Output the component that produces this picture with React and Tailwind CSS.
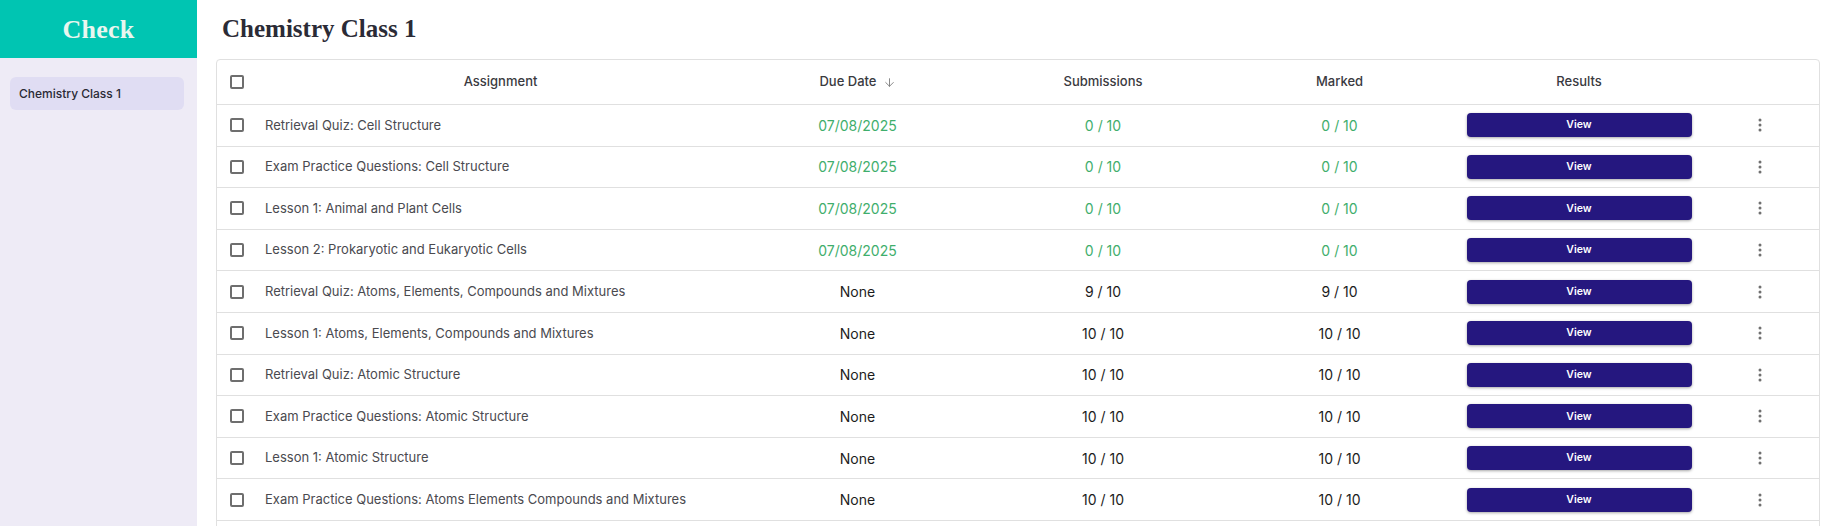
import { ArrowDown } from "lucide-react";

const rows = [
    { name: "Retrieval Quiz: Cell Structure", due: "07/08/2025", subs: "0 / 10", marked: "0 / 10", late: true },
    { name: "Exam Practice Questions: Cell Structure", due: "07/08/2025", subs: "0 / 10", marked: "0 / 10", late: true },
    { name: "Lesson 1: Animal and Plant Cells", due: "07/08/2025", subs: "0 / 10", marked: "0 / 10", late: true },
    { name: "Lesson 2: Prokaryotic and Eukaryotic Cells", due: "07/08/2025", subs: "0 / 10", marked: "0 / 10", late: true },
    { name: "Retrieval Quiz: Atoms, Elements, Compounds and Mixtures", due: "None", subs: "9 / 10", marked: "9 / 10" },
    { name: "Lesson 1: Atoms, Elements, Compounds and Mixtures", due: "None", subs: "10 / 10", marked: "10 / 10" },
    { name: "Retrieval Quiz: Atomic Structure", due: "None", subs: "10 / 10", marked: "10 / 10" },
    { name: "Exam Practice Questions: Atomic Structure", due: "None", subs: "10 / 10", marked: "10 / 10" },
    { name: "Lesson 1: Atomic Structure", due: "None", subs: "10 / 10", marked: "10 / 10" },
    { name: "Exam Practice Questions: Atoms Elements Compounds and Mixtures", due: "None", subs: "10 / 10", marked: "10 / 10" },
];

const cols = "grid grid-cols-[40px_487px_227px_264px_209px_270px_92px_1fr] items-center";

function Checkbox() {
    return <div className="w-[14px] h-[14px] border-2 border-[#6e6e6e] rounded-[2px] mx-auto" />;
}

function Kebab() {
    return (
        <svg width="4" height="14" viewBox="0 0 4 14" className="mx-auto">
            <circle cx="2" cy="2" r="1.5" fill="#707070" />
            <circle cx="2" cy="7" r="1.5" fill="#707070" />
            <circle cx="2" cy="12" r="1.5" fill="#707070" />
        </svg>
    );
}

function Sidebar() {
    return (
        <aside className="w-[197px] shrink-0 h-full bg-[#eeebf6] flex flex-col">
            <div className="h-[58px] bg-[#00c5b2] flex items-center justify-center">
                <h1 className="text-[26px] font-bold text-[#e9f6ef] font-['Liberation_Serif',serif] tracking-[0.2px]">Check</h1>
            </div>
            <nav className="pl-[10px] pr-[13px] pt-[19px]">
                <div className="h-[33px] rounded-md bg-[#e0ddf3] flex items-center px-[9px] text-[12px] font-medium text-[#2a2a35]">
                    Chemistry Class 1
                </div>
            </nav>
        </aside>
    );
}

function App() {
    return (
        <div className="flex h-screen overflow-hidden bg-white font-['Inter',sans-serif]">
            <Sidebar />
            <main className="flex-1 pl-[19px] pr-[13px] min-w-0">
                <h2 className="h-[59px] pl-[6px] pt-[14px] text-[25px] leading-[30px] font-bold text-[#2b2b36] font-['Liberation_Serif',serif]">
                    Chemistry Class 1
                </h2>
                <div className="border border-[#e0e0e0] rounded-t-[4px]">
                    <div className={`${cols} h-[45px] border-b border-[#e0e0e0] text-[13px] font-medium text-[#3a3a3f]`}>
                        <Checkbox />
                        <div className="text-center">Assignment</div>
                        <div className="flex items-center justify-center gap-[6px]">
                            Due Date <ArrowDown size={13} strokeWidth={1.6} className="text-[#777]" />
                        </div>
                        <div className="text-center">Submissions</div>
                        <div className="text-center">Marked</div>
                        <div className="text-center">Results</div>
                        <div />
                        <div />
                    </div>
                    {rows.map((r) => {
                        const tone = r.late ? "text-[#3fae6c]" : "text-[#1c1c1c]";
                        return (
                            <div key={r.name} className={`${cols} h-[41.6px] border-b border-[#e0e0e0]`}>
                                <Checkbox />
                                <div className="pl-[8px] text-[13px] text-[#4a4a4f] truncate">{r.name}</div>
                                <div className={`text-center text-[14px] ${tone}`}>{r.due}</div>
                                <div className={`text-center text-[14px] ${tone}`}>{r.subs}</div>
                                <div className={`text-center text-[14px] ${tone}`}>{r.marked}</div>
                                <div className="flex justify-center">
                                    <button className="w-[225px] h-[24px] rounded-[4px] bg-[#25177f] text-white text-[10.5px] font-semibold shadow-[0_1px_3px_rgba(0,0,0,0.35)]">
                                        View
                                    </button>
                                </div>
                                <Kebab />
                                <div />
                            </div>
                        );
                    })}
                    <div className="h-[40px]" />
                </div>
            </main>
        </div>
    );
}

export default App;
